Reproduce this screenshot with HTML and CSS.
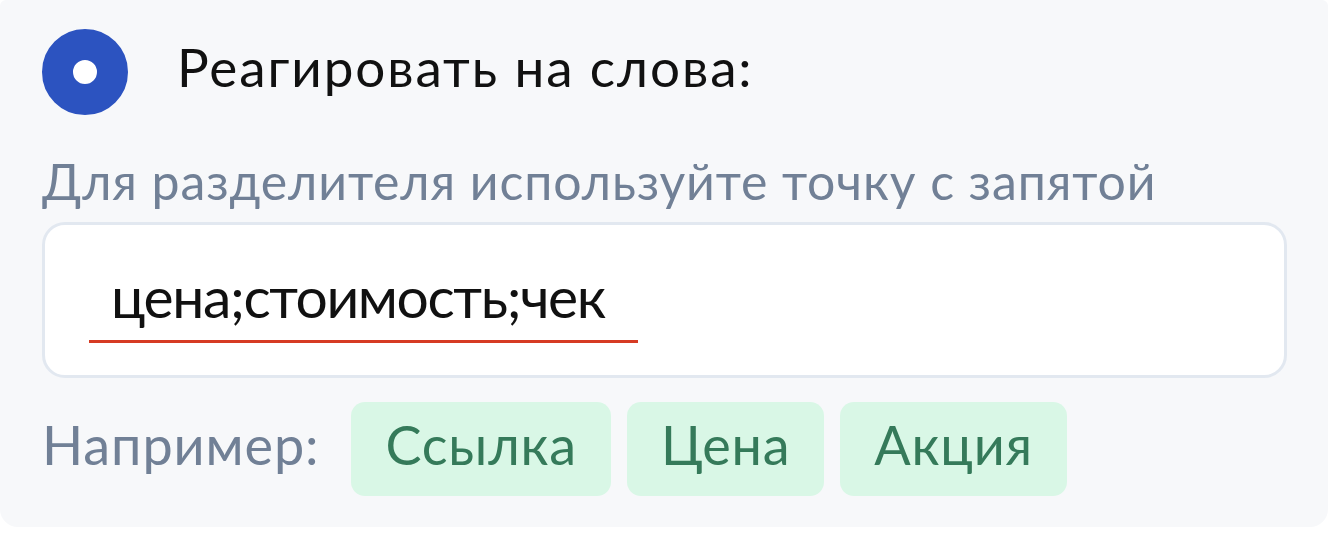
FILE: index.html
```html
<!DOCTYPE html>
<html lang="ru">
<head>
<meta charset="utf-8">
<title>Реагировать на слова</title>
<link rel="stylesheet" href="styles.css">
</head>
<body>
<div class="card">
  <div class="header">
    <span class="radio"></span>
    <span class="title">Реагировать на слова:</span>
  </div>
  <div class="hint">Для разделителя используйте точку с запятой</div>
  <div class="field">
    <span class="value">цена;стоимость;чек</span>
  </div>
  <div class="examples">
    <span class="examples-label">Например:</span>
    <span class="chip">Ссылка</span>
    <span class="chip">Цена</span>
    <span class="chip">Акция</span>
  </div>
</div>
</body>
</html>
```

FILE: styles.css
```css
html, body {
  margin: 0;
  padding: 0;
  background: #ffffff;
}

body {
  font-family: "Lato", "Noto Sans", sans-serif;
}

.card {
  background: #f7f8fa;
  border-radius: 6px 6px 18px 18px;
  padding: 29px 41px 31px 42px;
}

.header {
  display: flex;
  align-items: center;
  gap: 49px;
}

.radio {
  box-sizing: border-box;
  width: 86px;
  height: 86px;
  border-radius: 50%;
  border: 31px solid #2c53c0;
  background: #ffffff;
  flex: none;
}

.title {
  font-size: 53px;
  line-height: 64px;
  letter-spacing: 1.9px;
  color: #111111;
  margin-top: -10px;
}

.hint {
  margin-top: 36px;
  font-size: 50px;
  line-height: 60px;
  letter-spacing: 0.9px;
  color: #718096;
}

.field {
  margin-top: 11px;
  background: #ffffff;
  border: 3px solid #e2e8f0;
  border-radius: 23px;
  padding: 36px 20px 32px 44px;
}

.value {
  display: inline-block;
  font-size: 57px;
  line-height: 70px;
  letter-spacing: -1.4px;
  color: #111111;
  padding: 0 33px 9px 22px;
  border-bottom: 3px solid #d63b23;
}

.examples {
  margin-top: 24px;
  display: flex;
  align-items: flex-start;
  gap: 16px;
}

.examples-label {
  font-size: 54px;
  line-height: 74px;
  letter-spacing: 0.9px;
  padding-top: 6px;
  color: #718096;
  margin-right: 16px;
}

.chip {
  font-size: 54px;
  line-height: 74px;
  letter-spacing: 0.8px;
  padding: 6px 34px 14px;
  background: #d9f7e6;
  color: #357a5a;
  border-radius: 14px;
}
```
